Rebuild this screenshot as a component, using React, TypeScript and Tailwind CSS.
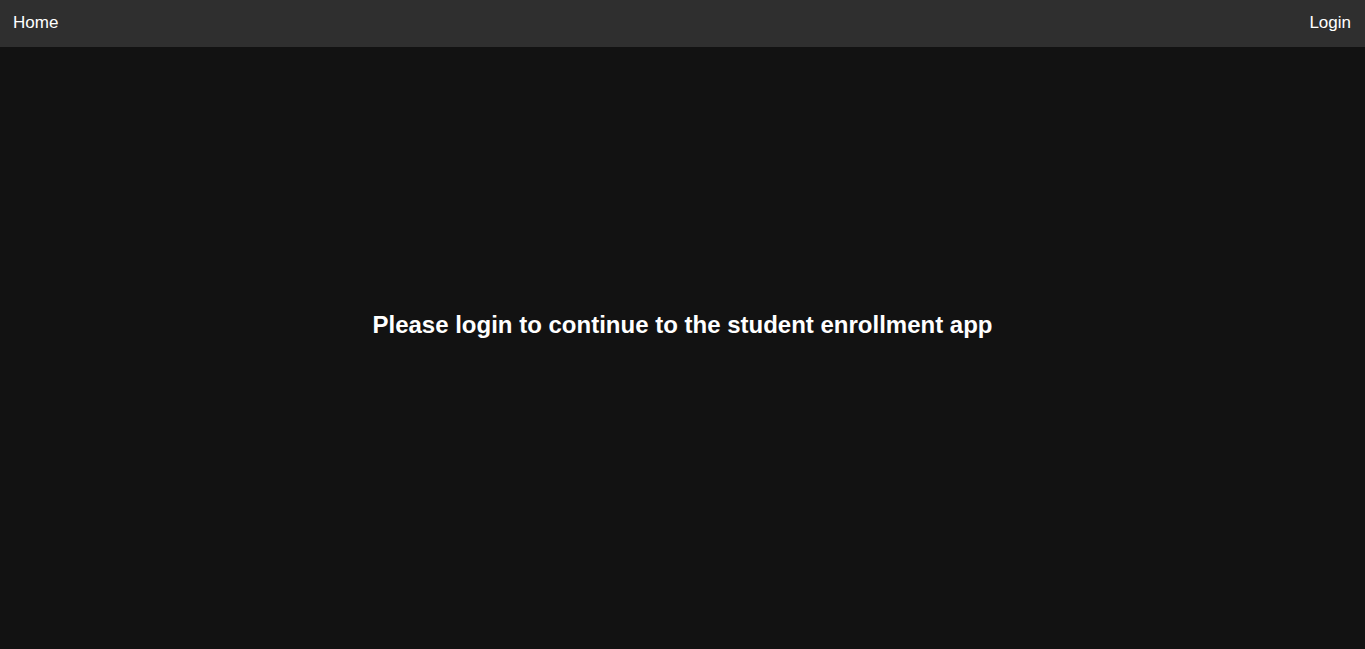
import React from 'react';

export default function App() {
  return (
    <div className="min-h-screen bg-[#121212] text-white font-['Liberation_Sans',Arial,sans-serif]">
      <nav className="flex h-[47px] items-center justify-between bg-[#2f2f2f] pl-[13px] pr-[14px] pb-[2px] text-[17px]">
        <a href="#" className="text-white">Home</a>
        <a href="#" className="text-white">Login</a>
      </nav>
      <main className="flex h-[602px] items-center justify-center pb-[46px]">
        <h2 className="text-2xl font-bold">Please login to continue to the student enrollment app</h2>
      </main>
    </div>
  );
}
